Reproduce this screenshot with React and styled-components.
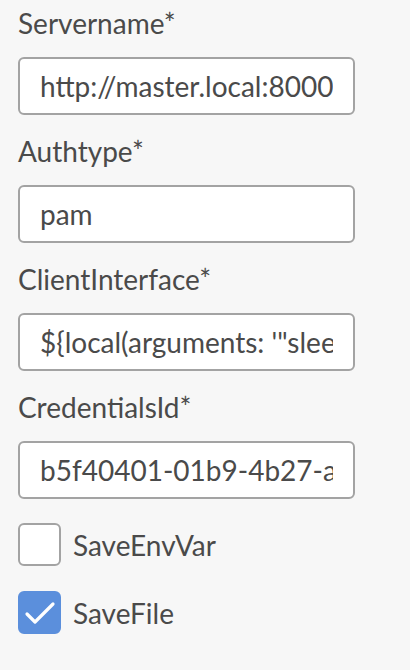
import React from 'react'
import styled, { createGlobalStyle } from 'styled-components'

const GlobalStyle = createGlobalStyle`
    html, body {
        margin: 0;
        padding: 0;
        background: #f7f7f7;
    }
    body {
        font-family: Lato, "Open Sans", sans-serif;
        color: #4a4a4a;
    }
`

const fields = [
    { label: 'Servername*', value: 'http://master.local:8000' },
    { label: 'Authtype*', value: 'pam' },
    { label: 'ClientInterface*', value: '${local(arguments: \'"sleep 10"\')}' },
    { label: 'CredentialsId*', value: 'b5f40401-01b9-4b27-a3c1-7f0d2e6b9a10' },
]

const options = [
    { label: 'SaveEnvVar', checked: false },
    { label: 'SaveFile', checked: true },
]

function App() {
    return (
        <Container>
            <GlobalStyle />
            {
                fields.map((item, i) => {
                    return <Field key={i}>
                        <Label>{item.label}</Label>
                        <Input defaultValue={item.value} readOnly />
                    </Field>
                })
            }
            <Checks>
                {
                    options.map((item, i) => {
                        return <CheckRow key={i}>
                            <Box $checked={item.checked}>
                                {item.checked &&
                                    <svg width="39" height="39" viewBox="0 0 39 39">
                                        <path d="M7 21 L15 29 L33 11" fill="none" stroke="#fff" strokeWidth="3.2" strokeLinecap="round" strokeLinejoin="round" />
                                    </svg>
                                }
                            </Box>
                            <CheckText>{item.label}</CheckText>
                        </CheckRow>
                    })
                }
            </Checks>
        </Container>
    )
}

export default App

const Container = styled.div`
    display: flex;
    flex-direction: column;
    padding: 6px 0 0 18px;
    width: 338px;
`

const Field = styled.div`
    display: flex;
    flex-direction: column;
    margin-bottom: 19px;
`

const Label = styled.label`
    font-size: 28px;
    line-height: 34px;
    margin-bottom: 17px;
`

const Input = styled.input`
    box-sizing: border-box;
    width: 337px;
    height: 58px;
    border: 2px solid #a3a3a3;
    border-radius: 6px;
    background: #fff;
    padding: 0 20px;
    font-family: Lato, sans-serif;
    font-size: 28px;
    color: #4a4a4a;
    outline: none;
`

const Checks = styled.div`
    display: flex;
    flex-direction: column;
    gap: 25px;
    margin-top: 5px;
`

const CheckRow = styled.div`
    display: flex;
    align-items: center;
    gap: 12px;
`

const Box = styled.div`
    box-sizing: border-box;
    width: 43px;
    height: 43px;
    border-radius: 6px;
    border: 2px solid ${p => p.$checked ? '#5b8fdc' : '#a3a3a3'};
    background: ${p => p.$checked ? '#5b8fdc' : '#fff'};
    display: flex;
    align-items: center;
    justify-content: center;
`

const CheckText = styled.span`
    font-size: 28px;
    line-height: 34px;
`
